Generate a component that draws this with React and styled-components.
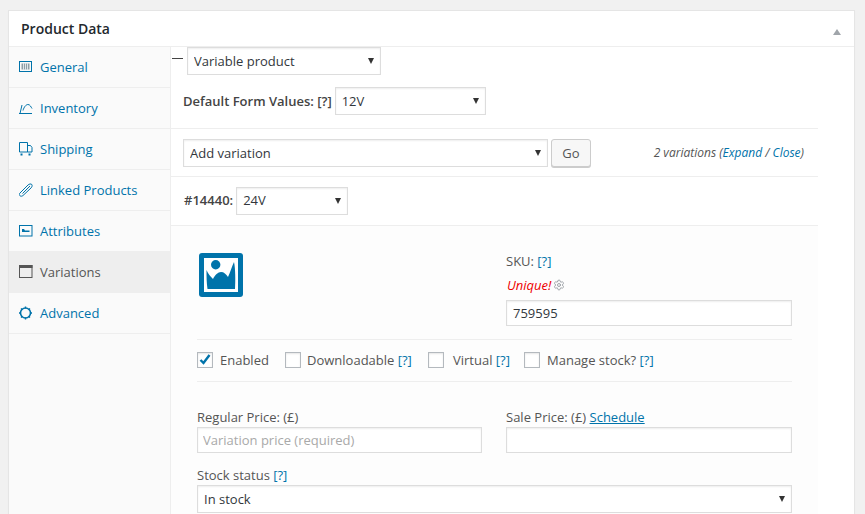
import styled, { createGlobalStyle } from "styled-components";
import { Settings } from "lucide-react";

const Global = createGlobalStyle`
  html, body {
    margin: 0;
    height: 514px;
    overflow: hidden;
    background: #f1f1f1;
    font-family: "Open Sans", sans-serif;
    font-size: 13px;
    color: #444;
  }
`;

const Card = styled.div`
  margin: 10px 10px 0 8px;
  width: 847px;
  box-sizing: border-box;
  height: 504px;
  background: #fff;
  border: 1px solid #e5e5e5;
  border-bottom: 0;
  box-shadow: 0 1px 1px rgba(0, 0, 0, 0.04);
`;

const Header = styled.div`
  height: 36px;
  box-sizing: border-box;
  padding: 8px 12px 0;
  display: flex;
  justify-content: space-between;
  align-items: flex-start;
  border-bottom: 1px solid #eee;
  font-size: 14px;
  font-weight: 600;
  line-height: 20px;
  color: #23282d;
`;

const Toggle = styled.span`
  width: 0;
  height: 0;
  margin: 10px 1px 0 0;
  border-left: 4px solid transparent;
  border-right: 4px solid transparent;
  border-bottom: 6px solid #a0a5aa;
`;

const Body = styled.div`
  display: flex;
  height: 467px;
`;

const Sidebar = styled.ul`
  width: 162px;
  box-sizing: border-box;
  margin: 0;
  padding: 0;
  list-style: none;
  background: #fafafa;
  border-right: 1px solid #eee;
`;

const Tab = styled.li`
  height: 41px;
  box-sizing: border-box;
  display: flex;
  align-items: center;
  gap: 7px;
  padding: 0 0 1px 10px;
  border-bottom: 1px solid #eee;
  background: ${(p) => (p.$active ? "#eee" : "transparent")};
  color: ${(p) => (p.$active ? "#555" : "#0073aa")};
  svg {
    flex: none;
  }
`;

const Main = styled.div`
  width: 647px;
`;

const TypeBlock = styled.div`
  height: 82px;
  box-sizing: border-box;
  border-bottom: 1px solid #eee;
`;

const TypeRow = styled.div`
  display: flex;
  align-items: flex-start;
  gap: 4px;
  padding-left: 1px;
`;

const Dash = styled.span`
  width: 11px;
  height: 1px;
  margin-top: 11px;
  background: #444;
`;

const DefaultsRow = styled.div`
  display: flex;
  align-items: center;
  gap: 3px;
  padding: 12px 0 0 12px;
`;

const Strong = styled.b`
  font-weight: 600;
`;

const ActionRow = styled.div`
  height: 48px;
  box-sizing: border-box;
  display: flex;
  align-items: flex-start;
  padding: 10px 14px 0 12px;
  border-bottom: 1px solid #eee;
`;

const Select = styled.select`
  appearance: none;
  display: block;
  width: ${(p) => p.$w}px;
  height: 28px;
  box-sizing: border-box;
  margin: 0;
  padding: 0 20px 0 6px;
  border: 1px solid #ddd;
  border-radius: 0;
  outline: 0;
  font: 13px "Open Sans", sans-serif;
  color: #32373c;
  box-shadow: inset 0 1px 2px rgba(0, 0, 0, 0.07);
  background: #fff url("data:image/svg+xml,%3Csvg xmlns='http://www.w3.org/2000/svg' width='6' height='6'%3E%3Cpath d='M0 0h6L3 6z' fill='%23333'/%3E%3C/svg%3E") no-repeat right 6px center;
`;

const TermSelect = styled(Select)`
  padding-bottom: 2px;
`;

const GoButton = styled.button`
  width: 40px;
  height: 28px;
  margin: 0 0 0 3px;
  padding: 0;
  border: 1px solid #ccc;
  border-radius: 3px;
  background: #f7f7f7;
  box-shadow: 0 1px 0 #ccc;
  font: 13px "Open Sans", sans-serif;
  color: #555;
`;

const Count = styled.em`
  margin: 5px 0 0 auto;
  font-size: 12px;
  line-height: 18px;
  color: #555;
`;

const Link = styled.a`
  color: #0073aa;
  text-decoration: ${(p) => (p.$underline ? "underline" : "none")};
`;

const VariationHead = styled.div`
  height: 49px;
  box-sizing: border-box;
  display: flex;
  align-items: flex-start;
  gap: 3px;
  padding: 10px 0 0 13px;
  border-bottom: 1px solid #eee;
  line-height: 26px;
`;

const Panel = styled.div`
  height: 288px;
  box-sizing: border-box;
  padding: 26px 26px 0;
  background: #fdfdfd;
`;

const TopGrid = styled.div`
  display: grid;
  grid-template-columns: 309px 286px;
  height: 87px;
`;

const Thumb = styled.svg`
  display: block;
  margin: 1px 0 0 2px;
`;

const Label = styled.div`
  line-height: 18px;
  color: #555;
`;

const UniqueRow = styled.div`
  display: flex;
  align-items: center;
  gap: 2px;
  height: 18px;
  margin: 6px 0 6px 1px;
  color: #a0a5aa;
`;

const Unique = styled.em`
  font-weight: 500;
  color: #e00;
`;

const Field = styled.input`
  display: block;
  width: ${(p) => p.$w}px;
  height: 26px;
  box-sizing: border-box;
  margin: 0;
  padding: 0 6px;
  border: 1px solid #ddd;
  border-radius: 0;
  outline: 0;
  font: 13px "Open Sans", sans-serif;
  color: #32373c;
  background: #fff;
  box-shadow: inset 0 1px 2px rgba(0, 0, 0, 0.07);
  &::placeholder {
    color: #a9a9a9;
    opacity: 1;
  }
`;

const PriceField = styled(Field)`
  padding: 0 5px;
`;

const Options = styled.div`
  height: 43px;
  box-sizing: border-box;
  display: flex;
  align-items: center;
  padding-bottom: 1px;
  border-top: 1px solid #eee;
  border-bottom: 1px solid #eee;
`;

const Option = styled.label`
  display: flex;
  align-items: center;
  gap: ${(p) => p.$gap}px;
  width: ${(p) => p.$w}px;
  color: #555;
`;

const Box = styled.span`
  width: 16px;
  height: 16px;
  box-sizing: border-box;
  flex: none;
  border: 1px solid #b4b9be;
  background: #fff;
  box-shadow: inset 0 1px 2px rgba(0, 0, 0, 0.1);
  svg {
    display: block;
  }
`;

const PriceGrid = styled.div`
  display: grid;
  grid-template-columns: 309px 286px;
  margin-top: 26px;
`;

const StockBlock = styled.div`
  margin-top: 13px;
`;

const FieldLabel = styled(Label)`
  height: 19px;
  line-height: 19px;
`;

function Icon({ children }) {
  return (
    <svg width="14" height="14" viewBox="0 0 14 14" fill="none" stroke="currentColor" strokeWidth="1">
      {children}
    </svg>
  );
}

const tabs = [
  {
    name: "General",
    icon: (
      <>
        <rect x="0.5" y="1.500" width="12" height="10" />
        <path d="M2.500 3.500h8v6h-8z" fill="#8f9ea6" stroke="none" />
        <path d="M4.500 3v7M6.500 3v7M8.500 3v7" stroke="#dfe6ea" />
      </>
    ),
  },
  {
    name: "Inventory",
    icon: <path d="M0 12.500h13M1 12.500L3 4M4 9.500C5 6 7 3.500 9 3.500 11 3.500 12 6 13 7.500" />,
  },
  {
    name: "Shipping",
    icon: (
      <>
        <path d="M0.500 0.500h8v9.500h-8zM8.500 3.500h3l1.500 2v4.500h-4.500" />
        <path d="M1.500 11.500h2v2h-2zM9.500 11.500h2v2h-2z" fill="currentColor" stroke="none" />
      </>
    ),
  },
  {
    name: "Linked Products",
    icon: (
      <path d="M1 10L9 2C10 1 12 .5 12.800 1.500 13.500 2.500 13 4 12 5L4 12.500C3 13.500 1.500 13.300 1 12.800 .2 12 0 11 1 10zM3.500 10.500L11 3" />
    ),
  },
  {
    name: "Attributes",
    icon: (
      <>
        <rect x="0.5" y="1.500" width="12.500" height="10.500" />
        <path d="M3 5h2l1 1.500h4.500v1.500H3z" fill="currentColor" stroke="none" />
      </>
    ),
  },
  {
    name: "Variations",
    active: true,
    icon: (
      <>
        <rect x="0.5" y="0.500" width="12.500" height="12" />
        <path d="M0 0h13.500v3H0z" fill="currentColor" stroke="none" />
      </>
    ),
  },
  {
    name: "Advanced",
    icon: (
      <>
        <circle cx="6.500" cy="7" r="5" strokeWidth="1.600" />
        <path d="M6.500 0.500v2M6.500 11.500v2M0 7h2M11 7h2M2 2.500l1.300 1.300M9.700 10.200L11 11.500M2 11.500l1.300-1.300M9.700 3.800L11 2.500" strokeWidth="1.400" />
      </>
    ),
  },
];

export default function App() {
  return (
    <>
      <Global />
      <Card>
        <Header>
          Product Data
          <Toggle />
        </Header>
        <Body>
          <Sidebar>
            {tabs.map((tab) => (
              <Tab key={tab.name} $active={tab.active}>
                <Icon>{tab.icon}</Icon>
                {tab.name}
              </Tab>
            ))}
          </Sidebar>
          <Main>
            <TypeBlock>
              <TypeRow>
                <Dash />
                <Select $w={194} defaultValue="variable">
                  <option value="variable">Variable product</option>
                </Select>
              </TypeRow>
              <DefaultsRow>
                <Strong>Default Form Values: [?]</Strong>
                <Select $w={151} defaultValue="12">
                  <option value="12">12V</option>
                </Select>
              </DefaultsRow>
            </TypeBlock>
            <ActionRow>
              <Select $w={365} defaultValue="add">
                <option value="add">Add variation</option>
              </Select>
              <GoButton>Go</GoButton>
              <Count>
                2 variations (<Link>Expand</Link> / <Link>Close</Link>)
              </Count>
            </ActionRow>
            <VariationHead>
              <Strong>#14440:</Strong>
              <TermSelect $w={112} defaultValue="24">
                <option value="24">24V</option>
              </TermSelect>
            </VariationHead>
            <Panel>
              <TopGrid>
                <Thumb width="44" height="44" viewBox="0 0 44 44">
                  <rect width="44" height="44" rx="3" fill="#0073aa" />
                  <rect x="5" y="5" width="34" height="34" fill="#fff" />
                  <circle cx="16.700" cy="11.700" r="4.700" fill="#0073aa" />
                  <path d="M7.500 17C9 21 12 24 14 26 16 22 19 19 22 19 25 19 27 21 29 24 31 20 33 13 35 9 36.500 16 36.500 28 36 36H8.500C7.500 30 7.500 23 7.500 17z" fill="#0073aa" />
                </Thumb>
                <div>
                  <Label>
                    SKU: <Link>[?]</Link>
                  </Label>
                  <UniqueRow>
                    <Unique>Unique!</Unique>
                    <Settings size={12} />
                  </UniqueRow>
                  <Field $w={286} defaultValue="759595" />
                </div>
              </TopGrid>
              <Options>
                <Option $w={88} $gap={7}>
                  <Box>
                    <svg width="14" height="14" viewBox="0 0 14 14">
                      <path d="M2.500 7l3 3 6-8" fill="none" stroke="#0073aa" strokeWidth="2.400" />
                    </svg>
                  </Box>
                  Enabled
                </Option>
                <Option $w={143} $gap={6}>
                  <Box />
                  <span>
                    Downloadable <Link>[?]</Link>
                  </span>
                </Option>
                <Option $w={96} $gap={9}>
                  <Box />
                  <span>
                    Virtual <Link>[?]</Link>
                  </span>
                </Option>
                <Option $w={140} $gap={7}>
                  <Box />
                  <span>
                    Manage stock? <Link>[?]</Link>
                  </span>
                </Option>
              </Options>
              <PriceGrid>
                <div>
                  <FieldLabel>Regular Price: (£)</FieldLabel>
                  <PriceField $w={285} placeholder="Variation price (required)" />
                </div>
                <div>
                  <FieldLabel>
                    Sale Price: (£) <Link $underline>Schedule</Link>
                  </FieldLabel>
                  <Field $w={286} />
                </div>
              </PriceGrid>
              <StockBlock>
                <FieldLabel>
                  Stock status <Link>[?]</Link>
                </FieldLabel>
                <Select $w={595} defaultValue="in">
                  <option value="in">In stock</option>
                </Select>
              </StockBlock>
            </Panel>
          </Main>
        </Body>
      </Card>
    </>
  );
}
